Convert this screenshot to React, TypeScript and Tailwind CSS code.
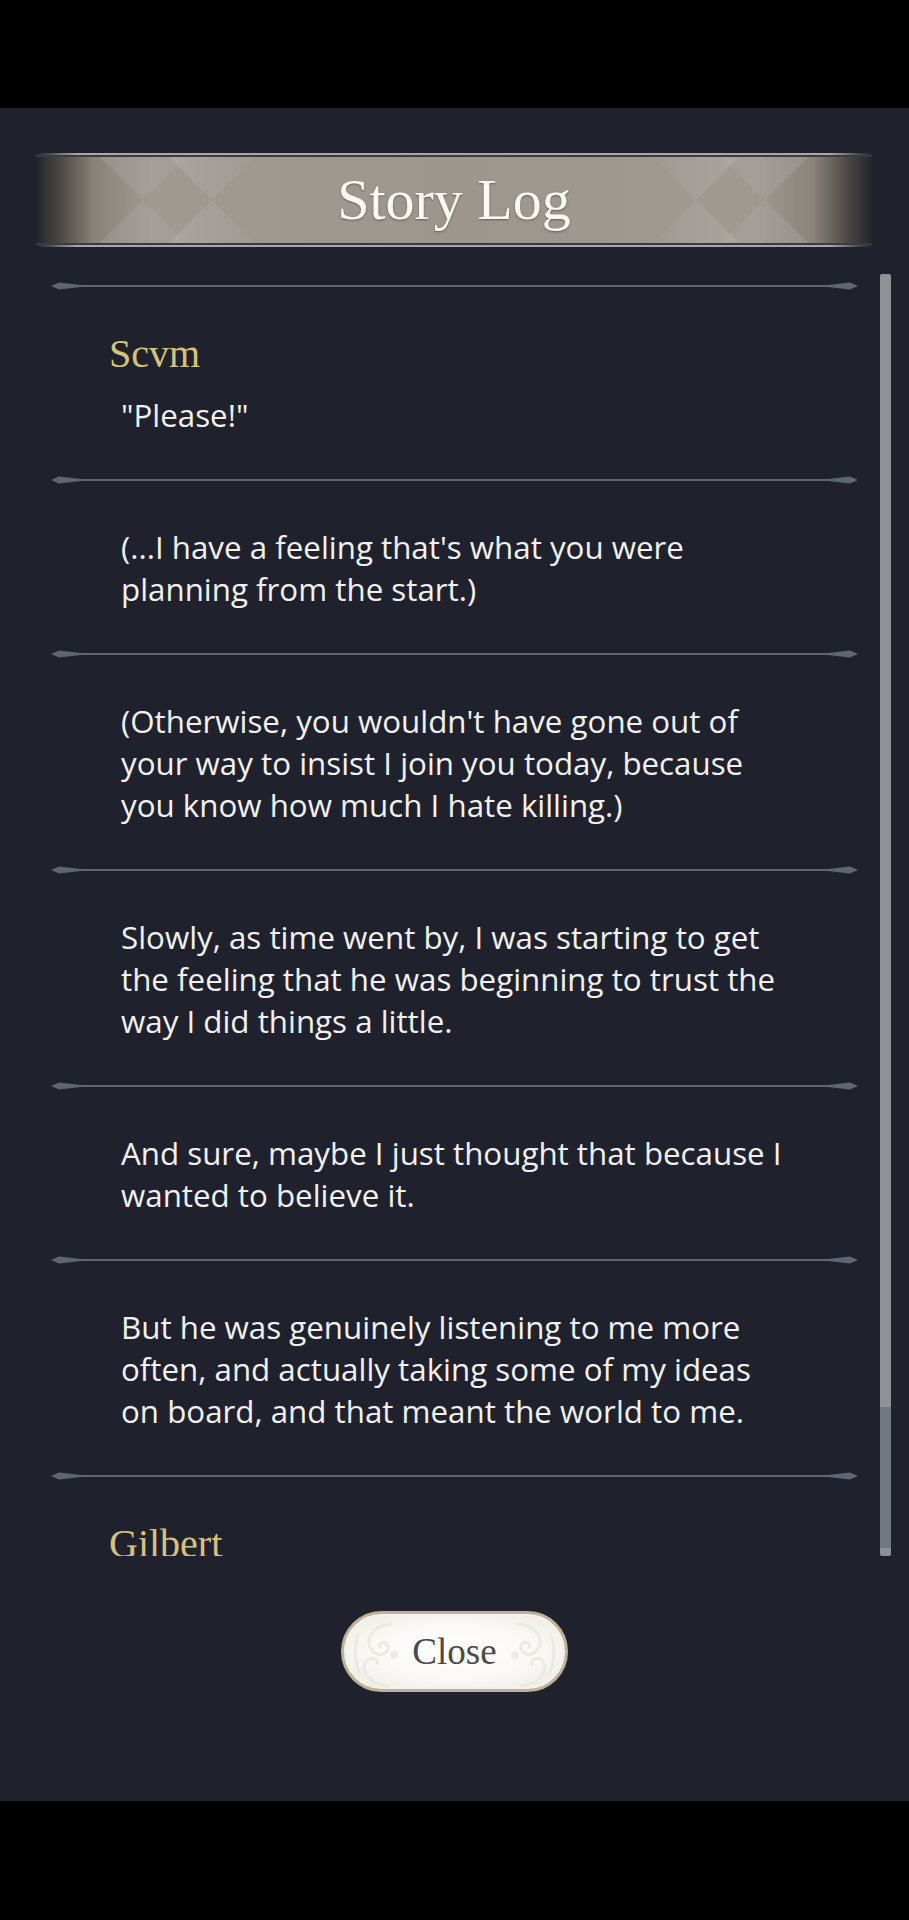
import React from 'react';

type Entry = { name?: string; lines: string[] };

const LOG: Entry[] = [
  { name: 'Scvm', lines: ['"Please!"'] },
  { lines: ["(...I have a feeling that's what you were", 'planning from the start.)'] },
  {
    lines: [
      "(Otherwise, you wouldn't have gone out of",
      'your way to insist I join you today, because',
      'you know how much I hate killing.)',
    ],
  },
  {
    lines: [
      'Slowly, as time went by, I was starting to get',
      'the feeling that he was beginning to trust the',
      'way I did things a little.',
    ],
  },
  { lines: ['And sure, maybe I just thought that because I', 'wanted to believe it.'] },
  {
    lines: [
      'But he was genuinely listening to me more',
      'often, and actually taking some of my ideas',
      'on board, and that meant the world to me.',
    ],
  },
  { name: 'Gilbert', lines: [] },
];

// thin rule with spindle tips on both ends
function Divider() {
  return (
    <svg width="807" height="10" viewBox="0 0 807 10" className="block">
      <path
        d="M0 5 L8 1.6 L30 3.9 L777 3.9 L799 1.6 L807 5 L799 8.4 L777 6.1 L30 6.1 L8 8.4 Z"
        fill="#5e6671"
      />
    </svg>
  );
}

// soft argyle highlights at both ends of the title band
function BandPattern() {
  const xs = [107, 176];
  return (
    <svg className="absolute inset-0" width="836" height="86" viewBox="0 0 836 86">
      <defs>
        <linearGradient id="fadeL" x1="0" x2="1">
          <stop offset="0" stopColor="#fff" stopOpacity="0.1" />
          <stop offset="1" stopColor="#fff" stopOpacity="0.02" />
        </linearGradient>
        <linearGradient id="fadeR" x1="1" x2="0">
          <stop offset="0" stopColor="#fff" stopOpacity="0.1" />
          <stop offset="1" stopColor="#fff" stopOpacity="0.02" />
        </linearGradient>
      </defs>
      {xs.map((x, i) => (
        <g key={'l' + i}>
          <polygon points={`${x - 43},0 ${x + 43},86 ${x - 43},86 ${x + 43},0`} fill="url(#fadeL)" />
        </g>
      ))}
      {xs.map((x, i) => {
        const r = 836 - x;
        return (
          <g key={'r' + i}>
            <polygon points={`${r + 43},0 ${r - 43},86 ${r + 43},86 ${r - 43},0`} fill="url(#fadeR)" />
          </g>
        );
      })}
    </svg>
  );
}

function Swirl({ flip }: { flip?: boolean }) {
  return (
    <svg
      width="60"
      height="77"
      viewBox="0 0 60 77"
      className={flip ? 'absolute right-[6px] top-[2px] -scale-x-100' : 'absolute left-[6px] top-[2px]'}
    >
      <g fill="none" stroke="#ece9e2" strokeWidth="3" strokeLinecap="round">
        <path d="M40 8 C22 10 14 24 22 34 C28 42 40 38 38 30 C36 24 28 26 30 31" />
        <path d="M38 70 C20 68 10 56 16 46 C20 40 28 42 27 48" />
        <path d="M8 20 C4 30 4 46 10 58" />
      </g>
      <circle cx="44" cy="39" r="4" fill="#eeebe5" />
    </svg>
  );
}

function LogBlock({ entry }: { entry: Entry }) {
  return (
    <div className={entry.name ? 'pt-[39px] pb-[39px]' : 'pt-[41px] pb-[39px]'}>
      {entry.name && (
        <div className="pl-[58px] font-['Liberation_Serif',serif] text-[40px] leading-[48px] text-[#d8c27b]">
          {entry.name}
        </div>
      )}
      {entry.lines.length > 0 && (
        <div
          className={
            (entry.name ? 'mt-[16px] ' : '') +
            "pl-[70px] font-['Open_Sans',sans-serif] text-[31.3px] leading-[42px] text-[#f1f1f1]"
          }
        >
          {entry.lines.map((l, i) => (
            <div key={i} className="whitespace-nowrap">
              {l}
            </div>
          ))}
        </div>
      )}
    </div>
  );
}

export default function App() {
  return (
    <div className="w-[909px] h-[1920px] flex flex-col bg-black overflow-hidden">
      <div className="h-[108px] bg-black" />

      <div className="h-[1693px] flex flex-col bg-[#1f222d]">
        {/* title band */}
        <div className="mt-[45px] ml-[36px] w-[836px] flex flex-col">
          <div className="h-[2px] bg-[linear-gradient(90deg,transparent,#a9a9ad_5%,#a9a9ad_95%,transparent)]" />
          <div className="h-[2px] bg-[#3a3a40]" />
          <div className="relative h-[86px] flex items-center justify-center bg-[linear-gradient(90deg,#22242c_0%,#4e4944_3%,#8a837c_7%,#a09a93_14%,#9d968f_50%,#a09a93_86%,#8a837c_93%,#4e4944_97%,#22242c_100%)]">
            <BandPattern />
            <span className="relative font-['Liberation_Serif',serif] text-[58px] leading-none text-[#fbf8f1] [text-shadow:0_1px_2px_rgba(60,55,50,0.6)]">
              Story Log
            </span>
          </div>
          <div className="h-[2px] bg-[#3a3a40]" />
          <div className="h-[2px] bg-[linear-gradient(90deg,transparent,#a9a9ad_5%,#a9a9ad_95%,transparent)]" />
        </div>

        {/* scrolling log */}
        <div className="mt-[27px] h-[1282px] flex">
          <div className="ml-[51px] w-[807px] h-full overflow-hidden pt-[7px]">
            {LOG.map((e, i) => (
              <div key={i}>
                <Divider />
                <LogBlock entry={e} />
              </div>
            ))}
          </div>
          <div className="ml-[22px] w-[11px] h-full flex flex-col rounded-[2px] overflow-hidden">
            <div className="flex-1 bg-[#8f9197]" />
            <div className="h-[141px] bg-[#737780]" />
            <div className="h-[8px] bg-[#8c8f95]" />
          </div>
        </div>

        {/* close button */}
        <div className="mt-[55px] flex justify-center">
          <div className="relative w-[227px] h-[81px] rounded-full border-[3px] border-[#bdb297] bg-[radial-gradient(ellipse_at_center,#ffffff_0%,#f9f8f5_55%,#ebe7df_100%)] shadow-[inset_0_0_0_2px_#f4f1ea] flex items-center justify-center">
            <Swirl />
            <Swirl flip />
            <span className="relative font-['Liberation_Serif',serif] text-[37px] leading-none text-[#4b4a46]">
              Close
            </span>
          </div>
        </div>
      </div>

      <div className="flex-1 bg-black" />
    </div>
  );
}
